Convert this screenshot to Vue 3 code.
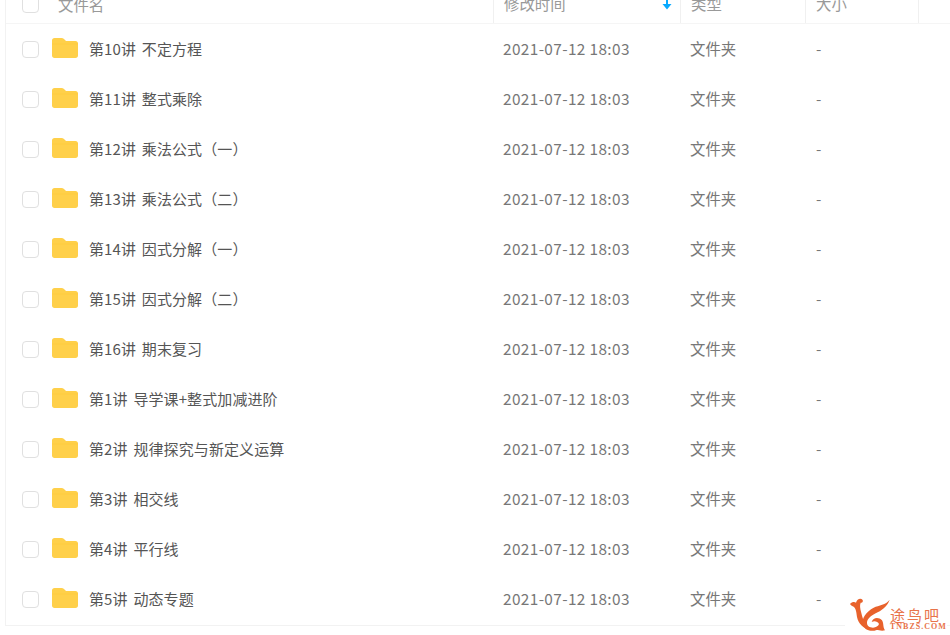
<template>
  <div class="page">
    <div class="file-list">
      <div class="head">
        <div class="col-check"><span class="check"></span></div>
        <div class="col-name head-name">文件名</div>
        <div class="col-time head-cell">
          修改时间
          <svg class="sort" viewBox="0 0 10 12">
            <path d="M4 0h2v6h3.500L5 11.500.5 6H4z" fill="#09aaff"/>
          </svg>
        </div>
        <div class="col-type head-cell">类型</div>
        <div class="col-size head-cell">大小</div>
        <div class="col-rest head-cell"></div>
      </div>

      <div class="row" v-for="item in files" :key="item">
        <div class="col-check"><span class="check"></span></div>
        <div class="col-name">
          <svg class="folder" viewBox="0 0 26 20">
            <path d="M0 2.500C0 1 1 0 2.500 0h7c1 0 1.800.3 2.500 1l2 2h9.500C25 3 26 4 26 5.500v12c0 1.500-1 2.500-2.500 2.500h-21C1 20 0 19 0 17.500z" fill="#ffd04a"/>
            <path d="M0 5.500h26v1H0z" fill="#ffc933" opacity=".5"/>
          </svg>
          <span class="name">{{ item }}</span>
        </div>
        <div class="col-time cell date">2021-07-12 18:03</div>
        <div class="col-type cell">文件夹</div>
        <div class="col-size cell dash">-</div>
      </div>
    </div>

    <div class="mark">
      <svg class="bird" viewBox="0 0 150 120">
        <path d="M15 27C22 19 30 21 33 23 36 12 47 8 53 15 55 20 51 25 47 23 44 30 45 40 49 54 53 72 60 90 74 103 56 102 40 86 36 66 34 50 33 41 26 35 22 33 18 32 15 27z" fill="#e8622c"/>
        <path d="M134 14C127 36 108 47 92 55 78 62 66 72 66 84 66 93 74 98 84 98 93 98 100 93 102 87 98 79 88 77 80 81 84 67 101 65 111 76 117 86 113 96 120 106 109 109 101 105 95 105 80 111 60 107 54 90 48 70 64 50 86 38 102 30 122 30 134 14z" fill="#e8622c"/>
      </svg>
      <div class="mark-text">
        <div class="mark-cn">途鸟吧</div>
        <div class="mark-en">TNBZS.COM</div>
      </div>
    </div>
  </div>
</template>

<script setup>
const files = [
  '第10讲 不定方程',
  '第11讲 整式乘除',
  '第12讲 乘法公式（一）',
  '第13讲 乘法公式（二）',
  '第14讲 因式分解（一）',
  '第15讲 因式分解（二）',
  '第16讲 期末复习',
  '第1讲 导学课+整式加减进阶',
  '第2讲 规律探究与新定义运算',
  '第3讲 相交线',
  '第4讲 平行线',
  '第5讲 动态专题'
]
</script>

<style>
html,
body {
  margin: 0;
  background: #fff;
  overflow: hidden;
}
</style>

<style scoped>
.page {
  position: relative;
  width: 950px;
  height: 635px;
  overflow: hidden;
  font-family: "Noto Sans CJK SC", "Open Sans", sans-serif;
  font-size: 15.4px;
  color: #666;
}

.file-list {
  margin-top: -15px;
  margin-left: 5px;
  padding-bottom: 1px;
  border-left: 1px solid #f2f2f2;
  border-bottom: 1px solid #f2f2f2;
}

.head {
  display: flex;
  height: 39px;
  line-height: 36px;
  border-bottom: 1px solid #f5f5f5;
  box-sizing: border-box;
  color: #999;
}

.row {
  display: flex;
  height: 50px;
  line-height: 48px;
}

.col-check {
  display: flex;
  align-items: center;
  width: 46px;
  padding-left: 16px;
  box-sizing: border-box;
  flex-shrink: 0;
}

.check {
  width: 15px;
  height: 15px;
  border: 1px solid #e0e0e0;
  border-radius: 4px;
}

.col-name {
  display: flex;
  align-items: center;
  width: 441px;
  flex-shrink: 0;
}

.head-name {
  padding-left: 6px;
  box-sizing: border-box;
}

.folder {
  width: 26px;
  height: 20px;
  margin-right: 11px;
  margin-bottom: 3px;
}

.name {
  margin-bottom: 1px;
  color: #555;
  font-size: 15px;
  letter-spacing: .1px;
  word-spacing: 2.3px;
}

.col-time {
  width: 187px;
  flex-shrink: 0;
  box-sizing: border-box;
  padding-left: 10px;
}

.col-type {
  width: 125px;
  flex-shrink: 0;
  box-sizing: border-box;
  padding-left: 10px;
}

.col-size {
  width: 113px;
  flex-shrink: 0;
  box-sizing: border-box;
  padding-left: 10px;
}

.col-rest {
  flex: 1;
}

.head-cell {
  position: relative;
  border-left: 1px solid #f0f0f0;
  padding-left: 10px;
}

.sort {
  position: absolute;
  right: 8px;
  top: 13px;
  width: 10px;
  height: 12px;
}

.cell {
  color: #777;
}

.date {
  letter-spacing: .37px;
}

.dash {
  padding-left: 11px;
}

.mark {
  position: absolute;
  left: 845px;
  top: 595px;
  display: flex;
  background: #fff;
}

.bird {
  width: 50px;
  height: 40px;
  margin-right: -5px;
}

.mark-text {
  margin-top: 12px;
  color: #e8734a;
}

.mark-cn {
  font-size: 15px;
  line-height: 16px;
  letter-spacing: 2px;
}

.mark-en {
  font-family: "Liberation Serif", serif;
  font-size: 8px;
  line-height: 8px;
  font-weight: 700;
  letter-spacing: 1px;
}
</style>
